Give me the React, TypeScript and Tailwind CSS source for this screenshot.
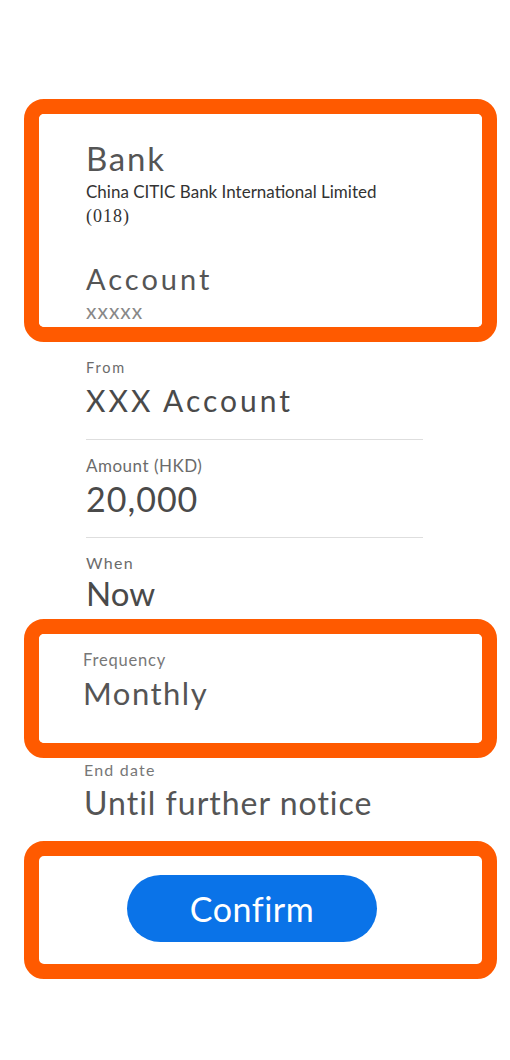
const sans = "font-['Lato','Liberation_Sans',sans-serif]"

export default function App() {
  return (
    <div className={`${sans} w-[510px] h-[1060px] bg-white overflow-hidden pt-[99px]`}>
      {/* payee */}
      <div className="ml-[24px] w-[473px] rounded-[20px] border-[15px] border-[#ff5a00]">
        <div className="rounded-[5px] bg-white pl-[47px] pt-[28px] pb-[6px]">
          <p className="text-[33px] leading-[33px] tracking-[1.75px] text-[#555]">Bank</p>
          <p className="mt-[7px] text-[17px] leading-[20px] text-[#333]">China CITIC Bank International Limited</p>
          <p className="mt-[4px] text-[18px] leading-[20px] tracking-[1px] text-[#333] font-['Liberation_Serif',serif]">(018)</p>
          <p className="mt-[38px] text-[29px] leading-[29px] tracking-[3px] text-[#555]">Account</p>
          <p className="mt-[7px] text-[21px] leading-[21px] tracking-[1px] text-[#888]">xxxxx</p>
        </div>
      </div>

      <div className="ml-[86px] mt-[19px]">
        <p className="text-[14.5px] leading-[14px] tracking-[1.8px] text-[#6b6b6b]">From</p>
        <p className="mt-[10px] text-[30px] leading-[30px] tracking-[3px] text-[#4a4a4a]">XXX Account</p>
      </div>
      <div className="ml-[86px] mt-[24px] w-[337px] h-px bg-[#dedede]" />
      <div className="ml-[86px] mt-[17px]">
        <p className="text-[17px] leading-[17px] tracking-[0.5px] text-[#6b6b6b]">Amount (HKD)</p>
        <p className="mt-[8px] text-[34px] leading-[34px] tracking-[1px] text-[#4a4a4a]">20,000</p>
      </div>
      <div className="ml-[86px] mt-[21px] w-[337px] h-px bg-[#dedede]" />
      <div className="ml-[86px] mt-[17px]">
        <p className="text-[16px] leading-[16px] tracking-[1.3px] text-[#6b6b6b]">When</p>
        <p className="mt-[6px] text-[33px] leading-[33px] text-[#4a4a4a]">Now</p>
      </div>

      {/* frequency */}
      <div className="mt-[9px] ml-[24px] w-[473px] rounded-[20px] border-[15px] border-[#ff5a00]">
        <div className="rounded-[5px] bg-white pl-[44px] pt-[18px] pb-[34px]">
          <p className="text-[16.5px] leading-[16px] tracking-[0.8px] text-[#777]">Frequency</p>
          <p className="mt-[10px] text-[31px] leading-[31px] tracking-[1.5px] text-[#555]">Monthly</p>
        </div>
      </div>

      <div className="ml-[84px] mt-[4px]">
        <p className="text-[16px] leading-[16px] tracking-[1.2px] text-[#777]">End date</p>
        <p className="mt-[9px] text-[32px] leading-[32px] tracking-[1px] text-[#555]">Until further notice</p>
      </div>

      {/* action */}
      <div className="mt-[22px] ml-[24px] w-[473px] rounded-[20px] border-[15px] border-[#ff5a00]">
        <div className="pl-[88px] pt-[19px] pb-[22px]">
          <button className="w-[250px] h-[67px] rounded-full bg-[#0a73e8] text-white text-[34px] leading-[34px] tracking-[0.5px]">
            Confirm
          </button>
        </div>
      </div>
    </div>
  )
}
